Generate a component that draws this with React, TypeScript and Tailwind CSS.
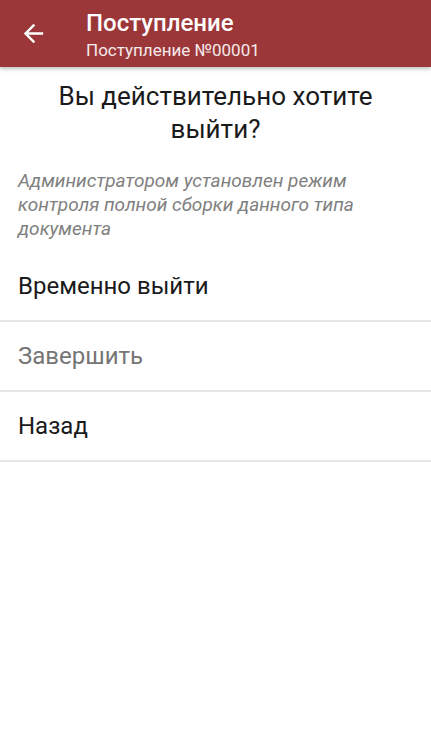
import React from "react";

export default function App() {
  return (
    <div className="w-[431px] h-[739px] bg-white overflow-hidden" style={{ fontFamily: "Roboto, 'Noto Sans', sans-serif" }}>
      <div className="h-[67px] bg-[#9b3639] flex items-center shadow-[0_2px_4px_rgba(0,0,0,0.25)] relative z-10">
        <div className="w-[86px] flex justify-center pr-[20px]">
          <svg width="29" height="29" viewBox="0 0 24 24" fill="white">
            <path d="M20 11H7.83l5.59-5.59L12 4l-8 8 8 8 1.41-1.41L7.83 13H20v-2z" />
          </svg>
        </div>
        <div className="flex flex-col text-white pt-[3px]">
          <div className="text-[24px] leading-[28px] font-medium">Поступление</div>
          <div className="mt-[2px] text-[17px] leading-[22px] text-white/90">Поступление №00001</div>
        </div>
      </div>
      <div className="pt-[13px] px-[18px] text-center text-[26px] leading-[33px] text-[#1a1a1a]">
        Вы действительно хотите<br />выйти?
      </div>
      <div className="mt-[23px] mb-[11px] pl-[18px] pr-[60px] text-[19px] leading-[24px] italic text-[#808080]">
        Администратором установлен режим контроля полной сборки данного типа документа
      </div>
      <div className="flex flex-col">
        <div className="h-[70px] border-b-2 border-[#e6e6e6] flex items-center px-[18px] text-[24px] text-[#1a1a1a]">Временно выйти</div>
        <div className="h-[70px] border-b-2 border-[#e6e6e6] flex items-center px-[18px] text-[24px] text-[#757575]">Завершить</div>
        <div className="h-[70px] border-b-2 border-[#e6e6e6] flex items-center px-[18px] text-[24px] text-[#1a1a1a]">Назад</div>
      </div>
    </div>
  );
}
